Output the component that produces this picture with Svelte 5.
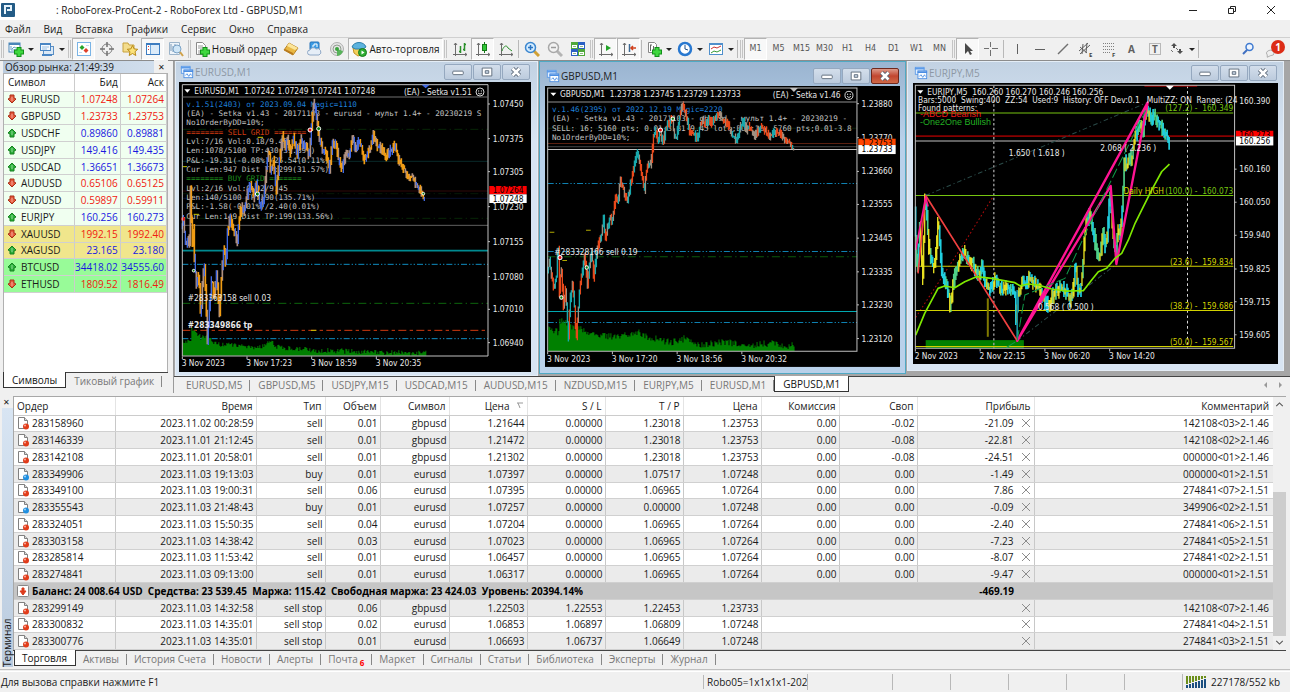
<script lang="ts">
	type Point = [number, number];
	type Tool = { icon: string; label: string; active?: boolean };

	const menu = ['Файл', 'Вид', 'Вставка', 'Графики', 'Сервис', 'Окно', 'Справка'];

	const panelTools: Tool[] = [
		{ icon: 'market', label: 'Обзор рынка', active: true },
		{ icon: 'target', label: 'Окно данных' },
		{ icon: 'folder', label: 'Избранное' },
		{ icon: 'navigator', label: 'Навигатор', active: true },
		{ icon: 'tester', label: 'Тестер стратегий' }
	];
	const serviceTools: Tool[] = [
		{ icon: 'gold', label: 'MetaEditor' },
		{ icon: 'cloud', label: 'Хостинг' },
		{ icon: 'signal', label: 'Сигналы' }
	];
	const chartTools: Tool[] = [
		{ icon: 'bars', label: 'Бары' },
		{ icon: 'candles', label: 'Свечи', active: true },
		{ icon: 'line', label: 'Линия' }
	];
	const zoomTools: Tool[] = [
		{ icon: 'zoomin', label: 'Увеличить' },
		{ icon: 'zoomout', label: 'Уменьшить' },
		{ icon: 'tiles', label: 'Мозаика' }
	];
	const scrollTools: Tool[] = [
		{ icon: 'autoscroll', label: 'Автопрокрутка', active: true },
		{ icon: 'shift', label: 'Сдвиг графика', active: true }
	];
	const cursorTools: Tool[] = [
		{ icon: 'cursor', label: 'Курсор', active: true },
		{ icon: 'cross', label: 'Перекрестие' }
	];
	const drawTools: Tool[] = [
		{ icon: 'vline', label: 'Вертикальная линия' },
		{ icon: 'hline', label: 'Горизонтальная линия' },
		{ icon: 'trend', label: 'Трендовая линия' },
		{ icon: 'channel', label: 'Канал' },
		{ icon: 'fibo', label: 'Фибоначчи' },
		{ icon: 'text', label: 'Текст' },
		{ icon: 'label', label: 'Метка' }
	];
	const periods = ['M1', 'M5', 'M15', 'M30', 'H1', 'H4', 'D1', 'W1', 'MN'];
	let period = $state('M1');

	const quotes = [
		{ symbol: 'EURUSD', bid: '1.07248', ask: '1.07264', up: false, group: 'fx' },
		{ symbol: 'GBPUSD', bid: '1.23733', ask: '1.23753', up: false, group: 'fx' },
		{ symbol: 'USDCHF', bid: '0.89860', ask: '0.89881', up: true, group: 'fx' },
		{ symbol: 'USDJPY', bid: '149.416', ask: '149.435', up: true, group: 'fx' },
		{ symbol: 'USDCAD', bid: '1.36651', ask: '1.36673', up: true, group: 'fx' },
		{ symbol: 'AUDUSD', bid: '0.65106', ask: '0.65125', up: false, group: 'fx' },
		{ symbol: 'NZDUSD', bid: '0.59897', ask: '0.59911', up: false, group: 'fx' },
		{ symbol: 'EURJPY', bid: '160.256', ask: '160.273', up: true, group: 'fx' },
		{ symbol: 'XAUUSD', bid: '1992.15', ask: '1992.40', up: false, group: 'metal' },
		{ symbol: 'XAGUSD', bid: '23.165', ask: '23.180', up: true, group: 'metal' },
		{ symbol: 'BTCUSD', bid: '34418.02', ask: '34555.60', up: true, group: 'crypto' },
		{ symbol: 'ETHUSD', bid: '1809.52', ask: '1816.49', up: false, group: 'crypto' }
	];

	const chartTabs = [
		'EURUSD,M5', 'GBPUSD,M5', 'USDJPY,M15', 'USDCAD,M15', 'AUDUSD,M15',
		'NZDUSD,M15', 'EURJPY,M5', 'EURUSD,M1', 'GBPUSD,M1'
	];
	let chartTab = $state(8);

	// order, time, type, volume, symbol, price, s/l, t/p, price, commission, swap, profit, comment
	const positions = [
		['283158960', '2023.11.02 00:28:59', 'sell', '0.01', 'gbpusd', '1.21644', '0.00000', '1.23018', '1.23753', '0.00', '-0.02', '-21.09', '142108<03>2-1.46'],
		['283146339', '2023.11.01 21:12:45', 'sell', '0.01', 'gbpusd', '1.21472', '0.00000', '1.23018', '1.23753', '0.00', '-0.08', '-22.81', '142108<02>2-1.46'],
		['283142108', '2023.11.01 20:58:01', 'sell', '0.01', 'gbpusd', '1.21302', '0.00000', '1.23018', '1.23753', '0.00', '-0.08', '-24.51', '000000<01>2-1.46'],
		['283349906', '2023.11.03 19:13:03', 'buy', '0.01', 'eurusd', '1.07397', '0.00000', '1.07517', '1.07248', '0.00', '0.00', '-1.49', '000000<01>2-1.51'],
		['283349100', '2023.11.03 19:00:31', 'sell', '0.06', 'eurusd', '1.07395', '0.00000', '1.06965', '1.07264', '0.00', '0.00', '7.86', '274841<07>2-1.51'],
		['283355543', '2023.11.03 21:48:43', 'buy', '0.01', 'eurusd', '1.07257', '0.00000', '0.00000', '1.07248', '0.00', '0.00', '-0.09', '349906<02>2-1.51'],
		['283324051', '2023.11.03 15:50:35', 'sell', '0.04', 'eurusd', '1.07204', '0.00000', '1.06965', '1.07264', '0.00', '0.00', '-2.40', '274841<06>2-1.51'],
		['283303158', '2023.11.03 14:38:42', 'sell', '0.03', 'eurusd', '1.07023', '0.00000', '1.06965', '1.07264', '0.00', '0.00', '-7.23', '274841<05>2-1.51'],
		['283285814', '2023.11.03 11:53:42', 'sell', '0.01', 'eurusd', '1.06457', '0.00000', '1.06965', '1.07264', '0.00', '0.00', '-8.07', '274841<02>2-1.51'],
		['283274841', '2023.11.03 09:13:00', 'sell', '0.01', 'eurusd', '1.06317', '0.00000', '1.06965', '1.07264', '0.00', '0.00', '-9.47', '000000<01>2-1.51']
	];
	const pending = [
		['283299149', '2023.11.03 14:32:58', 'sell stop', '0.06', 'gbpusd', '1.22503', '1.22553', '1.22453', '1.23733', '', '', '', '142108<07>2-1.46'],
		['283300832', '2023.11.03 14:35:01', 'sell stop', '0.02', 'eurusd', '1.06853', '1.06897', '1.06809', '1.07248', '', '', '', '274841<04>2-1.51'],
		['283300776', '2023.11.03 14:35:01', 'sell stop', '0.01', 'eurusd', '1.06693', '1.06737', '1.06649', '1.07248', '', '', '', '274841<03>2-1.51']
	];
	const headers = ['Ордер', 'Время', 'Тип', 'Объем', 'Символ', 'Цена', 'S / L', 'T / P', 'Цена', 'Комиссия', 'Своп', 'Прибыль', 'Комментарий'];

	const terminalTabs = ['Торговля', 'Активы', 'История Счета', 'Новости', 'Алерты', 'Почта', 'Маркет', 'Сигналы', 'Статьи', 'Библиотека', 'Эксперты', 'Журнал'];
	let terminalTab = $state(0);

	// --- Chart geometry, three units to a pixel ---

	function random(seed: number) {
		let s = seed;
		return () => {
			s = (s * 16807) % 2147483647;
			return s / 2147483647;
		};
	}

	function valueAt(points: Point[], x: number): number {
		for (let i = 1; i < points.length; i++) {
			const [x1, y1] = points[i];
			const [x0, y0] = points[i - 1];
			if (x <= x1) return y0 + ((y1 - y0) * (x - x0)) / (x1 - x0);
		}
		return points[points.length - 1][1];
	}

	/** One vertical stroke per bar, split into up, down and flat paths. */
	function priceBars(points: Point[], seed: number, spread: number) {
		const rnd = random(seed);
		const out = { up: '', down: '', flat: '' };
		const end = points[points.length - 1][0];
		for (let x = points[0][0]; x < end; x += 3) {
			const a = valueAt(points, x);
			const b = valueAt(points, x + 3);
			const top = Math.round(Math.min(a, b) - rnd() * spread);
			const bottom = Math.round(Math.max(a, b) + rnd() * spread);
			const flat = rnd() < 0.3;
			const follows = rnd() < 0.66;
			const key = flat ? 'flat' : b < a === follows ? 'up' : 'down';
			out[key] += `M${x} ${top}V${bottom}`;
		}
		return out;
	}

	function volumeArea(points: Point[], base: number, seed: number, jitter: number) {
		const rnd = random(seed);
		const end = points[points.length - 1][0];
		let d = `M${points[0][0]} ${base}`;
		for (let x = points[0][0]; x < end; x += 3) {
			d += `V${Math.round(valueAt(points, x) + (rnd() - 0.5) * jitter)}h3`;
		}
		return d + `V${base}Z`;
	}

	const eurusd = priceBars([
		[22, 500], [28, 480], [35, 560], [44, 530], [47, 560], [50, 310], [53, 570], [58, 510], [62, 620], [68, 680], [75, 640],
		[80, 790], [86, 640], [92, 625], [100, 850], [106, 740], [113, 650], [120, 720], [127, 640], [136, 765],
		[143, 640], [150, 550], [155, 620], [160, 520], [168, 470], [178, 510], [190, 545], [197, 460], [205, 440],
		[210, 460], [220, 400], [230, 370], [238, 410], [247, 370], [258, 440], [268, 420], [278, 310], [285, 270],
		[290, 340], [298, 300], [306, 400], [312, 340], [325, 230], [333, 265], [340, 240], [350, 280], [357, 230],
		[370, 280], [380, 235], [388, 260], [395, 255], [405, 290], [412, 200], [420, 125], [428, 180], [436, 240],
		[445, 270], [455, 280], [466, 330], [475, 250], [485, 245], [492, 290], [503, 330], [515, 280], [525, 290],
		[535, 235], [545, 275], [553, 240], [562, 260], [570, 300], [580, 285], [590, 260], [598, 225], [610, 260],
		[622, 265], [635, 290], [645, 275], [655, 268], [663, 255], [675, 305], [690, 325], [703, 352], [715, 350],
		[730, 380], [742, 400], [751, 420]
	], 11, 18);
	const eurusdVolume = volumeArea([
		[22, 845], [46, 845], [49, 800], [60, 820], [80, 835], [90, 825], [110, 845], [130, 852], [200, 856], [240, 862],
		[270, 858], [286, 838], [296, 856], [320, 864], [400, 870], [500, 873], [600, 878], [752, 879]
	], 887, 5, 16);

	const gbpusd = priceBars([
		[32, 640], [38, 600], [45, 650], [52, 690], [60, 640], [64, 530], [68, 700], [73, 610], [80, 740], [86, 690],
		[95, 830], [100, 720], [107, 670], [112, 720], [118, 840], [125, 740], [130, 670], [137, 630], [143, 590],
		[152, 670], [160, 600], [165, 570], [170, 650], [180, 580], [188, 540], [195, 520], [200, 470], [205, 545],
		[213, 500], [220, 470], [226, 490], [235, 415], [243, 430], [250, 360], [258, 375], [265, 410], [273, 418],
		[285, 350], [293, 310], [301, 268], [308, 310], [315, 345], [322, 400], [330, 320], [343, 310], [350, 225],
		[357, 215], [363, 240], [370, 220], [380, 245], [388, 200], [397, 190], [405, 170], [412, 220], [418, 238],
		[426, 180], [435, 135], [443, 150], [450, 180], [458, 210], [468, 218], [480, 236], [490, 200], [497, 180],
		[507, 195], [515, 180], [525, 190], [535, 175], [550, 162], [560, 185], [572, 190], [582, 220], [592, 232],
		[600, 238], [610, 200], [620, 185], [630, 210], [640, 200], [652, 230], [665, 210], [675, 200], [690, 220],
		[702, 228], [715, 215], [730, 222], [742, 238], [755, 242], [768, 266]
	], 23, 16);
	const gbpusdVolume = volumeArea([
		[32, 810], [60, 815], [65, 785], [80, 782], [100, 800], [130, 806], [150, 820], [220, 830], [270, 822], [300, 812],
		[320, 828], [400, 848], [440, 835], [480, 854], [560, 846], [620, 856], [680, 848], [768, 858]
	], 872, 31, 22);

	const eurjpy = priceBars([
		[33, 440], [40, 640], [48, 500], [57, 650], [63, 420], [70, 480], [75, 560], [82, 600], [90, 615], [97, 580],
		[103, 480], [110, 570], [115, 640], [125, 660], [132, 690], [139, 740], [147, 680], [155, 640], [165, 610],
		[175, 590], [181, 570], [190, 600], [198, 610], [207, 605], [215, 630], [225, 640], [235, 620], [243, 660],
		[256, 690], [265, 680], [275, 650], [285, 680], [295, 690], [310, 685], [325, 690], [334, 700], [337, 825],
		[340, 700], [350, 690], [357, 665], [365, 670], [377, 655], [390, 670], [405, 690], [415, 710], [425, 730],
		[435, 735], [450, 700], [462, 690], [475, 680], [490, 700], [497, 720], [505, 700], [515, 620], [522, 700],
		[530, 690], [537, 600], [542, 520], [548, 480], [556, 465], [563, 490], [570, 530], [577, 570], [585, 600],
		[592, 560], [596, 520], [603, 560], [610, 530], [617, 400], [623, 470], [630, 560], [636, 590], [641, 510],
		[648, 520], [655, 440], [661, 290], [668, 330], [675, 290], [683, 300], [690, 240], [697, 220], [707, 185],
		[717, 225], [722, 170], [728, 145], [735, 165], [742, 180], [748, 170], [756, 172], [765, 190], [775, 210],
		[785, 225], [793, 245]
	], 47, 26);

	const eurusdComment = [
		['v.1.51(2403) от 2023.09.04 Magic=1110', '#1e7fd8'],
		['(EA) - Setka v1.43 - 20171103 - eurusd - мульт 1.4+ - 20230219 S', '#c0c0c0'],
		['No1OrderByDD=10%;', '#c0c0c0'],
		['======== SELL GRID =======', '#d03a10'],
		['Lvl:7/16 Vol:0.18/9.45', '#c0c0c0'],
		['Len:1078/5100 TP:430(39.89%)', '#c0c0c0'],
		['P&L:-19.31(-0.08%)/25.54(0.11%)', '#c0c0c0'],
		['Cur Len:947 Dist TP:299(31.57%)', '#c0c0c0'],
		['======== BUY GRID =======', '#1e8f1e'],
		['Lvl:2/16 Vol:0.02/9.45', '#c0c0c0'],
		['Len:140/5100 TP:190(135.71%)', '#c0c0c0'],
		['P&L:-1.58(-0.01%)/2.40(0.01%)', '#c0c0c0'],
		['Cur Len:149 Dist TP:199(133.56%)', '#c0c0c0']
	];
	const gbpusdComment = [
		['v.1.46(2395) от 2022.12.19 Magic=2220', '#1e7fd8'],
		['(EA) - Setka v1.43 - 20171103 - gbpusd - мульт 1.4+ - 20230219 -', '#c0c0c0'],
		['SELL: 16; 5160 pts; 0.01-3.81-9.45 lots;BUY:16; 5760 pts;0.01-3.8', '#c0c0c0'],
		['No1OrderByDD=10%;', '#c0c0c0']
	];

	const eurusdScale: [string, number][] = [
		['1.07450', 132], ['1.07375', 236], ['1.07305', 335], ['1.07230', 440], ['1.07155', 545],
		['1.07080', 650], ['1.07010', 748], ['1.06940', 848]
	];
	const gbpusdScale: [string, number][] = [
		['1.23880', 131], ['1.23770', 233], ['1.23660', 334], ['1.23555', 433], ['1.23445', 534],
		['1.23335', 635], ['1.23230', 734], ['1.23120', 835]
	];
	const eurjpyScale: [string, number][] = [
		['160.390', 125], ['160.160', 328], ['160.050', 427], ['159.940', 526], ['159.825', 627],
		['159.715', 725], ['159.605', 824]
	];
	const eurjpyLevels: [string, number, string][] = [
		['(127.2) -  160.349', 160, '#76c410'],
		['(100.0) -  160.073', 407, '#76c410'],
		['(23.6) -  159.834', 619, '#d2d200'],
		['(38.2) -  159.686', 751, '#d2d200'],
		['(50.0) -  159.567', 859, '#d2d200']
	];
</script>

{#snippet icon(name: string)}
	<svg class="icon" viewBox="0 0 16 16" fill="none" aria-hidden="true">
		{#if name === 'newchart'}
			<rect x="1" y="2" width="11" height="9" fill="#fff" stroke="#4a86b8" />
			<path d="M1 3h11" stroke="#4a86b8" stroke-width="2" />
			<path d="M3 5v4h6M4 8l2-2 2 1" stroke="#6aa0cc" />
			<path d="M11 6v10M6 11h10" stroke="#12901a" stroke-width="5" />
			<path d="M11 7v8M7 11h8" stroke="#3fd83f" stroke-width="3" />
		{:else if name === 'profiles'}
			<rect x="4.500" y="5.500" width="10" height="8" fill="#dce9f6" stroke="#5b8fc4" />
			<rect x="1.500" y="2.500" width="10" height="7" fill="#f4f9ff" stroke="#4a86c4" />
			<path d="M1 3h11M3 14h10" stroke="#4a86c4" stroke-width="2" />
			<path d="M3 6h7M3 8h5" stroke="#9bbfe0" />
		{:else if name === 'market'}
			<rect x="1.500" y="1.500" width="13" height="13" fill="#fff" stroke="#7ab4e6" />
			<path d="M6 4l2.500 2.500L6 9 3.500 6.500z" fill="#25a528" />
			<path d="M10 7l2.500 2.500L10 12 7.500 9.500z" fill="#e0402a" />
			<path d="M3 11.500h3M10 4.500h3" stroke="#c6dcef" />
		{:else if name === 'target'}
			<circle cx="8" cy="8" r="5" stroke="#808080" />
			<path d="M8 1v5M8 10v5M1 8h5M10 8h5" stroke="#707070" stroke-width="1.500" />
		{:else if name === 'folder'}
			<path d="M1 2h5l1 2h5v7H1z" fill="#f3dc8c" stroke="#c7a23f" />
			<path d="M10.500 4.500l1.600 3.400 3.600.4-2.700 2.400.8 3.800-3.300-2-3.300 2 .8-3.800-2.700-2.400 3.600-.4z" fill="#fbe27a" stroke="#b98b18" />
		{:else if name === 'navigator'}
			<rect x="1.500" y="2.500" width="13" height="11" fill="#dcebf9" stroke="#3d7cc0" />
			<path d="M1 3h14" stroke="#3d7cc0" stroke-width="2" />
			<rect x="2" y="4" width="3" height="9" fill="#fff" />
			<path d="M3.500 5v1M3.500 8v1" stroke="#d33" />
			<path d="M5.500 4v9" stroke="#6fa5da" />
		{:else if name === 'tester'}
			<path d="M1.500 1.500h10v12h-10z" fill="#eef4fa" stroke="#9cb4ca" />
			<path d="M3 3v7M5 5v6M7 3v5" stroke="#7b9ab8" />
			<circle cx="9" cy="8" r="4" fill="#cfe6f7" stroke="#7aa2c6" />
			<path d="M12 11l3 4" stroke="#d0a24a" stroke-width="2" />
		{:else if name === 'neworder'}
			<path d="M2.500 1.500h6l3 3v9h-9z" fill="#fff" stroke="#8a8a8a" />
			<path d="M4 5h5M4 7h5M4 10h3M4 12h2" stroke="#999" />
			<path d="M11 6v10M6 11h10" stroke="#12901a" stroke-width="5" />
			<path d="M11 7v8M7 11h8" stroke="#3fd83f" stroke-width="3" />
		{:else if name === 'gold'}
			<path d="M6 2l9 5-5 7-9-5z" fill="#e9b844" stroke="#b98428" />
			<path d="M6 2l9 5-3 2-8-4z" fill="#fbe59a" />
			<path d="M1 9l9 5v-2L2 8z" fill="#b9791e" />
		{:else if name === 'cloud'}
			<rect x="4" y="1" width="9" height="8" rx="1" fill="#3c9be4" stroke="#2672b8" />
			<path d="M6 5h2V3h3v3" stroke="#fff" />
			<path d="M4 14a2.500 2.500 0 010-5 3.500 3.500 0 016-1 3 3 0 013 6z" fill="#e6eef7" stroke="#8fa8c6" />
		{:else if name === 'signal'}
			<circle cx="8" cy="8" r="6.500" fill="#e4e4e4" stroke="#b0b0b0" />
			<circle cx="8" cy="8" r="4" stroke="#909c90" />
			<path d="M8 8v7a7 7 0 006-5z" fill="#58b35a" />
			<circle cx="8" cy="8" r="2" fill="#3ba33f" />
		{:else if name === 'auto'}
			<path d="M2 7h11l-1 6-5 2-4-3z" fill="#f2cf5b" stroke="#c49226" />
			<path d="M1 6c2-6 12-6 14 0l-3 2H4z" fill="#5cb3de" stroke="#2f7faa" />
			<circle cx="11.500" cy="11.500" r="4" fill="#2fae33" stroke="#157a19" />
			<path d="M10.500 9.500v4l3-2z" fill="#fff" />
		{:else if name === 'bars' || name === 'candles' || name === 'line' || name === 'autoscroll' || name === 'shift'}
			<path d="M3.500 2v13M1 13.500h14M2 4l1.500-2L5 4M13 12l2 1.500L13 15" stroke="#6c6c6c" />
			{#if name === 'bars'}
				<path d="M8.500 5v7M7 10.500h1.500M12.500 2v8M11 8.500h1.500M12.500 3.500H14" stroke="#2a8f2a" stroke-width="1.500" />
			{:else if name === 'candles'}
				<path d="M9.500 1v11" stroke="#157a19" />
				<rect x="7.500" y="3.500" width="4" height="6" fill="#2fc636" stroke="#157a19" />
			{:else if name === 'line'}
				<path d="M4 10c2-6 5-6 6-3l4 3" stroke="#2a8f2a" />
			{:else if name === 'autoscroll'}
				<path d="M8 4v6l5-3z" fill="#22a428" />
			{:else}
				<path d="M8.500 3v8" stroke="#3d6a94" stroke-width="1.500" />
				<path d="M10 7h5M12 5l-2 2 2 2" stroke="#d0401c" stroke-width="1.500" />
			{/if}
		{:else if name === 'zoomin' || name === 'zoomout'}
			<path d="M10 10l5 5" stroke={name === 'zoomin' ? '#d0a035' : '#b4b4b4'} stroke-width="3" />
			<circle cx="6.500" cy="6.500" r="5" fill={name === 'zoomin' ? '#d4ecff' : '#f2f2f2'} stroke={name === 'zoomin' ? '#3b86cf' : '#a8a8a8'} stroke-width="1.500" />
			<path d={name === 'zoomin' ? 'M4 6.500h5M6.500 4v5' : 'M4 6.500h5'} stroke={name === 'zoomin' ? '#2b74c2' : '#9a9a9a'} stroke-width="1.500" />
		{:else if name === 'tiles'}
			<rect x="1" y="1" width="7" height="7" fill="#4fa83a" /><rect x="8" y="1" width="7" height="7" fill="#2b60c4" />
			<rect x="1" y="8" width="7" height="7" fill="#2b60c4" /><rect x="8" y="8" width="7" height="7" fill="#4fa83a" />
			<path d="M2 5.500h5M9 5.500h5M2 12.500h5M9 12.500h5" stroke="#fff" stroke-width="3" />
			<path d="M3 5.500h3M10 5.500h3M3 12.500h3M10 12.500h3" stroke="#8fb98a" />
		{:else if name === 'indicators'}
			<path d="M2.500 1.500h6l2 2v8h-8z" fill="#fff" stroke="#888" />
			<path d="M4 4h2M4.500 4v6M7.500 5v4" stroke="#666" />
			<path d="M11 6v10M6 11h10" stroke="#12901a" stroke-width="5" />
			<path d="M11 7v8M7 11h8" stroke="#3fd83f" stroke-width="3" />
		{:else if name === 'clock'}
			<circle cx="8" cy="8" r="6" fill="#fff" stroke="#2878d0" stroke-width="2.500" />
			<path d="M8 4v4l3 1" stroke="#1d4f88" />
		{:else if name === 'template'}
			<rect x="1.500" y="2.500" width="13" height="11" fill="#fff" stroke="#4f8fcb" />
			<path d="M1 3h14" stroke="#4f8fcb" stroke-width="2" />
			<path d="M3 8l3-2 3 1 4-2" stroke="#c33" /><path d="M3 12l3-2 3 1 4-2" stroke="#393" />
		{:else if name === 'cursor'}
			<path d="M5 2v11l3-3 2 4 2-1-2-3h3z" fill="#4a4a4a" />
		{:else if name === 'cross'}
			<path d="M7.500 1v5M7.500 9v6M1 7.500h5M9 7.500h6" stroke="#707070" />
		{:else if name === 'vline'}
			<path d="M8.500 3v10" stroke="#606060" />
		{:else if name === 'hline'}
			<path d="M3 8.500h10" stroke="#606060" />
		{:else if name === 'trend'}
			<path d="M3 13L13 3" stroke="#707070" stroke-width="1.500" />
		{:else if name === 'channel'}
			<path d="M1 10l9-8M2 13l10-9M2 6l7 6M5 3L4 13M9 2L8 12" stroke="#606060" />
			<text x="11" y="16" class="mini">E</text>
		{:else if name === 'fibo'}
			<path d="M2 2.500h12M2 5.500h12M2 8.500h12M2 11.500h8" stroke="#808080" stroke-dasharray="1 1" />
			<text x="11" y="16" class="mini">F</text>
		{:else if name === 'text'}
			<text x="4" y="12" class="letter">A</text>
		{:else if name === 'label'}
			<rect x="2.500" y="2.500" width="11" height="11" stroke="#808080" stroke-dasharray="1 1" />
			<text x="5" y="12" class="letter">T</text>
		{:else if name === 'arrows'}
			<path d="M5 2l3 3H6v2H4V5H2zM11 13l-3-3h2V8h2v2h2z" fill="#505050" /><path d="M2 9l2 2M7 7l2 2" stroke="#707070" />
		{:else if name === 'search'}
			<circle cx="9.500" cy="6" r="3.500" fill="#eef5ff" stroke="#3f7ad0" stroke-width="1.500" />
			<path d="M7 9l-4 4" stroke="#3f6fc0" stroke-width="2" />
		{:else if name === 'chart'}
			<rect x="1.500" y="1.500" width="10" height="8" fill="#e5f1ff" stroke="#5c9be8" /><path d="M1 3h11" stroke="#5c9be8" stroke-width="2" />
			<rect x="4.500" y="5.500" width="10" height="9" fill="#f8fcff" stroke="#4a8de2" /><path d="M4 7h11" stroke="#4a8de2" stroke-width="2" />
			<path d="M6 12l2-2 2 3 2-3 1 2" stroke="#4a8de2" />
		{/if}
	</svg>
{/snippet}

{#snippet tools(list: Tool[])}
	{#each list as tool}
		<button class="tool" class:pressed={tool.active} aria-label={tool.label}>{@render icon(tool.icon)}</button>
	{/each}
{/snippet}

{#snippet dropTool(name: string, label: string)}
	<button class="drop" aria-label={label}>
		{@render icon(name)}<span class="caret"></span>
	</button>
{/snippet}

{#snippet windowTitle(title: string)}
	<header class="win-title">
		{@render icon('chart')}
		<h2>{title}</h2>
		<div class="win-buttons">
			<button aria-label="Свернуть"><svg viewBox="0 0 28 16"><rect x="8" y="7" width="12" height="4" rx="1" fill="#fff" stroke="#566373" /></svg></button>
			<button aria-label="Развернуть"><svg viewBox="0 0 28 16"><path d="M8.500 3.500h11v9h-11zM12 6.500h4v3h-4z" fill="#fff" fill-rule="evenodd" stroke="#566373" /></svg></button>
			<button class="close" aria-label="Закрыть"><svg viewBox="0 0 28 16"><path d="M10 4l8 8M18 4l-8 8" stroke="#566373" stroke-width="5" /><path d="M10 4l8 8M18 4l-8 8" stroke="#fff" stroke-width="3" /></svg></button>
		</div>
	</header>
{/snippet}

{#snippet scale(list: [string, number][], x: number)}
	{#each list as [label, y]}
		<path d="M{x} {y}h6" stroke="#c0c0c0" stroke-width="3" />
		<text x={x + 14} y={y + 9}>{label}</text>
	{/each}
{/snippet}

{#snippet dates(list: string[], x: number, y: number)}
	{#each list as label, i}
		<path d="M{x + i * 194} {y - 30}v8" stroke="#c0c0c0" stroke-width="3" />
		<text x={x + i * 194 - 2} {y}>{label}</text>
	{/each}
{/snippet}

{#snippet smiley(x: number, y: number)}
	<g stroke="#fff" stroke-width="2.500" fill="none">
		<circle cx={x} cy={y} r="12" />
		<path d="M{x - 6} {y + 3}q6 7 12 0M{x - 4} {y - 5}v4M{x + 4} {y - 5}v4" />
	</g>
{/snippet}

{#snippet orderRow(row: string[])}
	<tr>
		{#each row as cell, i}
			{#if i === 0}
				<td class="order">
					<svg class="doc" viewBox="0 0 14 14" aria-hidden="true">
						<path d="M2.500 1.500h6l3 3v8h-9z" fill="#fff" stroke="#808080" />
						<path d="M8.500 1.500v3h3" fill="#ddd" stroke="#808080" />
						<circle cx="10" cy="10.500" r="3" fill={row[2] === 'buy' ? '#1f8fe0' : '#e23c1a'} />
						<circle cx="9" cy="9.500" r="1" fill="#fff" opacity=".6" />
					</svg>{cell}
				</td>
			{:else if i === 11}
				<td class="profit">
					{cell}<button class="cancel" aria-label="Закрыть ордер {row[0]}">
						<svg viewBox="0 0 10 10"><path d="M1 1l8 8M9 1L1 9" stroke="#8c8c8c" /></svg>
					</button>
				</td>
			{:else}
				<td class:bare={cell === ''}>{cell}</td>
			{/if}
		{/each}
	</tr>
{/snippet}

<div class="app">
	<header class="titlebar">
		<svg class="logo" viewBox="0 0 14 14" aria-hidden="true">
			<rect width="14" height="14" rx="1" fill="#235b86" />
			<path d="M4 11V3h6v4H6" stroke="#e6f3fb" stroke-width="2" fill="none" />
		</svg>
		<h1>: RoboForex-ProCent-2 - RoboForex Ltd - GBPUSD,M1</h1>
		<div class="caption">
			<button aria-label="Свернуть окно"><svg viewBox="0 0 10 10"><path d="M1 5.500h8" /></svg></button>
			<button aria-label="Восстановить окно"><svg viewBox="0 0 10 10"><path d="M1.500 3.500h5v5h-5zM3.500 3V1.500h5v5H7" /></svg></button>
			<button aria-label="Закрыть приложение"><svg viewBox="0 0 10 10"><path d="M1 1l8 8M9 1L1 9" /></svg></button>
		</div>
	</header>

	<nav class="menu">
		{#each menu as item}
			<button>{item}</button>
		{/each}
	</nav>

	<div class="toolbar">
		<span class="grip"></span>
		{@render dropTool('newchart', 'Новый график')}
		{@render dropTool('profiles', 'Профили')}
		<span class="grip"></span>
		{@render tools(panelTools)}
		<span class="grip"></span>
		<button class="wide order-btn">{@render icon('neworder')}Новый ордер</button>
		{@render tools(serviceTools)}
		<button class="wide auto-btn pressed">{@render icon('auto')}Авто-торговля</button>
		<span class="grip"></span>
		{@render tools(chartTools)}
		<span class="sep"></span>
		{@render tools(zoomTools)}
		<span class="grip"></span>
		{@render tools(scrollTools)}
		<span class="sep"></span>
		{@render dropTool('indicators', 'Индикаторы')}
		{@render dropTool('clock', 'Периоды')}
		{@render dropTool('template', 'Шаблоны')}
		<span class="sep"></span>
		<span class="grip"></span>
		{#each periods as p}
			<button class="tool period" class:pressed={period === p} onclick={() => (period = p)}>{p}</button>
		{/each}
		<span class="grip"></span>
		{@render tools(cursorTools)}
		<span class="sep"></span>
		{@render tools(drawTools)}
		{@render dropTool('arrows', 'Стрелки')}
		<span class="sep"></span>
		<div class="toolbar-end">
			<button class="tool" aria-label="Поиск">{@render icon('search')}</button>
			<button class="chat" aria-label="Сообщения">
				<svg viewBox="0 0 16 16" aria-hidden="true"><path d="M3 12a5 4 0 118 0l-4 1-4 2z" fill="#eee" stroke="#999" /></svg>
				<span class="badge">1</span>
			</button>
		</div>
	</div>

	<div class="main">
		<section class="watch">
			<header class="watch-title">
				<h2>Обзор рынка: 21:49:39</h2>
				<button aria-label="Закрыть обзор рынка">✕</button>
			</header>
			<div class="watch-body">
				<table class="quotes">
					<thead>
						<tr><th>Символ</th><th>Бид</th><th>Аск</th></tr>
					</thead>
					<tbody>
						{#each quotes as q}
							<tr class={q.group}>
								<td>
									<svg class="dir" class:down={!q.up} viewBox="0 0 10 10" aria-hidden="true">
										<path d="M5 1l4 4-2 1v3H3V6L1 5z" /><path d="M5 3v4" class="shine" />
									</svg>{q.symbol}
								</td>
								<td class:fall={!q.up}>{q.bid}</td>
								<td class:fall={!q.up}>{q.ask}</td>
							</tr>
						{/each}
					</tbody>
				</table>
			</div>
			<div class="tabs watch-tabs">
				<button class="tab current">Символы</button>
				<button class="tab">Тиковый график</button>
			</div>
		</section>

		<section class="desk">
			<div class="workspace">
				<article class="win first">
					{@render windowTitle('EURUSD,M1')}
					<svg class="chart" viewBox="12 66 1056 870">
						<rect x="12" y="66" width="1056" height="870" />
						<g fill="none" stroke-width="2">
							<path d="M22 208H939M22 475H939" stroke="#0b3a0b" stroke-dasharray="24 10 4 10" />
							<path d="M22 401H939" stroke="#0a240a" stroke-dasharray="24 10 4 10" />
							<path d="M22 304H939" stroke="#0d4040" />
							<path d="M22 393H939" stroke="#4a0c0c" />
							<path d="M22 415H939" stroke="#0d1a4a" />
							<path d="M22 496H939" stroke="#909090" />
							<path d="M22 572H939" stroke="#008a90" stroke-width="5" />
							<path d="M22 613H939M22 836H939" stroke="#0f8cc0" stroke-width="3" stroke-dasharray="18 6 4 6 4 6" />
							<path d="M22 730H939" stroke="#0d640d" stroke-width="3" stroke-dasharray="24 10 4 10" />
							<path d="M22 811H939" stroke="#d03a10" stroke-width="3" stroke-dasharray="24 10 10 10" />
						</g>
						<path d={eurusdVolume} fill="#008000" />
						<g class="comment">
							{#each eurusdComment as [text, color], i}
								<text x="34" y={140 + i * 28} fill={color}>{text}</text>
							{/each}
						</g>
						<g fill="none" stroke-width="5">
							<path d={eurusd.flat} stroke="#b09080" />
							<path d={eurusd.down} stroke="#f09c14" />
							<path d={eurusd.up} stroke="#4169e1" stroke-width="4" />
							<path d="M22 320h14M248 232h16M56 463h16M408 811h16" stroke="#c8c800" stroke-width="3" />
						</g>
						<g stroke="#fff" stroke-width="3">
							<circle cx="405" cy="210" r="6" fill="#e01010" /><circle cx="431" cy="206" r="6" fill="#0a7a0a" />
							<circle cx="247" cy="402" r="6" fill="#0a7a0a" /><circle cx="745" cy="401" r="4" fill="#0a7a0a" />
							<circle cx="56" cy="632" r="4" fill="#0a7a0a" />
						</g>
						<circle cx="24" cy="477" r="6" fill="#e01010" />
						<path d="M22 74H939V888H22Z" fill="none" stroke="#c0c0c0" stroke-width="3" />
						<path d="M22 111H939" stroke="#707070" stroke-width="3" />
						<path d="M740 74h24l-12 11z" fill="#4169e1" />
						<path d="M28 88h18l-9 10z" fill="#fff" />
						<text x="58" y="102">EURUSD,M1  1.07242 1.07249 1.07241 1.07248</text>
						<text x="890" y="104" text-anchor="end">(EA) - Setka v1.51</text>
						{@render smiley(915, 96)}
						<text x="38" y="724">#283363158 sell 0.03</text>
						<text x="38" y="805" class="bold">#283349866 tp</text>
						{@render scale(eurusdScale, 939)}
						{@render dates(['3 Nov 2023', '3 Nov 17:23', '3 Nov 18:59', '3 Nov 20:35'], 22, 919)}
						<rect x="943" y="378" width="112" height="25" fill="#f00" />
						<text x="953" y="400" class="dark">1.07264</text>
						<rect x="943" y="403" width="112" height="26" fill="#fff" />
						<text x="953" y="425" class="dark">1.07248</text>
					</svg>
				</article>

				<article class="win second">
					{@render windowTitle('GBPUSD,M1')}
					<svg class="chart" viewBox="22 78 1064 842">
						<rect x="22" y="78" width="1064" height="842" />
						<g fill="none" stroke-width="3">
							<path d="M30 370H957M30 574H957M30 787H957" stroke="#0f80b0" stroke-dasharray="18 6 4 6 4 6" />
							<path d="M30 590H957" stroke="#0b5a0b" stroke-dasharray="24 10 4 10" />
							<path d="M30 205H957" stroke="#0a200a" stroke-dasharray="24 10 4 10" />
							<path d="M30 250H957" stroke="#5a2010" />
							<path d="M30 260H957" stroke="#686868" stroke-width="2" />
							<path d="M30 268H957" stroke="#c0c0c0" />
							<path d="M30 754H957" stroke="#00a8b0" />
						</g>
						<path d={gbpusdVolume} fill="#008000" />
						<g class="comment">
							{#each gbpusdComment as [text, color], i}
								<text x="43" y={156 + i * 28} fill={color}>{text}</text>
							{/each}
						</g>
						<g fill="none" stroke-width="4">
							<path d={gbpusd.flat} stroke="#a09080" />
							<path d={gbpusd.down} stroke="#e8481a" />
							<path d={gbpusd.up} stroke="#18a8ac" />
							<path d="M36 516h14M145 510h14M74 601h14" stroke="#b0a800" stroke-width="3" />
						</g>
						<g stroke="#fff" stroke-width="3">
							<circle cx="368" cy="210" r="6" fill="#e01010" /><circle cx="405" cy="176" r="5" fill="#0a7a0a" />
							<circle cx="67" cy="592" r="6" fill="#e01010" /><circle cx="71" cy="712" r="5" fill="#0a7a0a" />
							<circle cx="147" cy="622" r="5" fill="#0a7a0a" />
						</g>
						<path d="M30 84H957V873H30Z" fill="none" stroke="#c0c0c0" stroke-width="3" />
						<path d="M30 126H957" stroke="#909090" stroke-width="3" />
						<path d="M756 84h24l-12 12z" fill="#c0c0c0" />
						<path d="M38 98h18l-9 10z" fill="#fff" />
						<text x="67" y="112">GBPUSD,M1  1.23738 1.23745 1.23729 1.23733</text>
						<text x="908" y="114" text-anchor="end">(EA) - Setka v1.46</text>
						{@render smiley(933, 106)}
						<text x="50" y="585">#283328166 sell 0.19</text>
						{@render scale(gbpusdScale, 957)}
						{@render dates(['3 Nov 2023', '3 Nov 17:20', '3 Nov 18:56', '3 Nov 20:32'], 30, 904)}
						<rect x="961" y="236" width="112" height="19" fill="#ff4500" />
						<text x="971" y="257" class="dark">1.23753</text>
						<rect x="961" y="255" width="112" height="27" fill="#fff" />
						<text x="971" y="277" class="dark">1.23733</text>
					</svg>
				</article>

				<article class="win third">
					{@render windowTitle('EURJPY,M5')}
					<svg class="chart" viewBox="25 70 1093 842">
						<rect x="25" y="70" width="1093" height="842" />
						<rect x="63" y="840" width="294" height="24" fill="#008000" />
						<g fill="none" stroke-width="3">
							<path d="M32 229H988" stroke="#800" stroke-width="5" />
							<path d="M32 244H988" stroke="#c0c0c0" />
							<path d="M267 78V864" stroke="#a0a0a0" stroke-width="4" stroke-dasharray="7 7" />
							<path d="M847 78V864" stroke="#d8d8d8" stroke-dasharray="8 8" />
							<path d="M63 407L728 128" stroke="#2a4a48" stroke-dasharray="14 8 4 8" />
							<path d="M337 842L632 614" stroke="#2a4a48" stroke-dasharray="14 8 4 8" />
							<path d="M33 772L181 545L267 407" stroke="#b00c0c" stroke-dasharray="5 7" />
							{#each eurjpyLevels as [, y, color]}
								<path d="M32 {y}H984" stroke={color} />
							{/each}
						</g>
						<g fill="none" stroke-width="5">
							<path d={eurjpy.flat} stroke="#4fd088" />
							<path d={eurjpy.down} stroke="#20cfe0" />
							<path d={eurjpy.up} stroke="#e8e020" stroke-width="4" />
							<path d="M249 715V830" stroke="#807a00" stroke-width="6" />
							<path d="M337 690V842" stroke="#1c90a0" />
						</g>
						<g fill="none" stroke-linejoin="round">
							<path d="M40 640L63 407L337 842" stroke="#f04040" stroke-width="5" />
							<path d="M33 570L63 412L70 440" stroke="#ff1493" stroke-width="5" />
							<path d="M337 842L728 128L634 612L617 378Z" stroke="#ff1493" stroke-width="7" />
							<path d="M305 862L337 842L360 705L480 655L560 480L722 152" stroke="#0f9a4a" stroke-width="3" stroke-dasharray="30 10" />
							<path d="M33 825L60 760L100 685L120 678L150 683L180 665L215 650L260 655L330 668L345 677L370 672L400 675L440 687L480 693L535 692L560 660L580 635L605 625L630 595L650 580L670 540L690 490L710 450L740 390L770 335L793 313" stroke="#7fe800" stroke-width="5" />
						</g>
						<path d="M718 79h158" stroke="#900" stroke-width="5" />
						<path d="M32 77H988V864H32Z" fill="none" stroke="#c0c0c0" stroke-width="3" />
						<path d="M782 78h24l-12 12z" fill="#fff" />
						<path d="M38 92h18l-9 10z" fill="#fff" />
						<text x="68" y="105">EURJPY,M5  160.260 160.270 160.246 160.256</text>
						<text x="40" y="131">Bars:5000  Swing:400  ZZ:54  Used:9  History: OFF Dev:0.1   MultiZZ: ON  Range: (24</text>
						<text x="40" y="155">Found patterns:</text>
						<text x="46" y="171" class="pattern" fill="#f01818">-ABCD Bearish</text>
						<text x="46" y="195" class="pattern" fill="#22b022">-One2One Bullish</text>
						<text x="312" y="290">1.650 ( 1.618 )</text>
						<text x="586" y="274">2.068 ( 2.236 )</text>
						<text x="399" y="751">0.568 ( 0.500 )</text>
						{#each eurjpyLevels as [label, y, color]}
							<text x="984" y={y - 5} text-anchor="end" style:fill={color}>{label}</text>
						{/each}
						<text x="655" y="402" class="daily">Daily HIGH</text>
						{@render scale(eurjpyScale, 988)}
						{@render dates(['2 Nov 2023', '2 Nov 22:15', '3 Nov 06:20', '3 Nov 14:20'], 32, 896)}
						<rect x="992" y="213" width="112" height="17" fill="#f00" />
						<text x="1002" y="234" class="dark">160.273</text>
						<rect x="992" y="230" width="112" height="27" fill="#fff" />
						<text x="1002" y="252" class="dark">160.256</text>
					</svg>
				</article>
			</div>
			<nav class="tabs chart-tabs">
				{#each chartTabs as tab, i}
					<button class="tab" class:current={chartTab === i} onclick={() => (chartTab = i)}>{tab}</button>
				{/each}
				<span class="tab-scroll"><i class="left"></i><i class="right"></i></span>
			</nav>
		</section>
	</div>

	<section class="terminal">
		<aside class="strip">
			<button aria-label="Закрыть терминал">✕</button>
			<h2>Терминал</h2>
		</aside>
		<div class="terminal-body">
			<div class="orders-wrap">
				<table class="orders">
					<colgroup>
						<col class="c-order" /><col class="c-time" /><col class="c-type" /><col class="c-volume" /><col class="c-symbol" />
						<col class="c-price" /><col class="c-price" /><col class="c-price" /><col class="c-price" /><col class="c-price" /><col class="c-price" />
						<col class="c-profit" /><col />
					</colgroup>
					<thead>
						<tr>
							{#each headers as h, i}
								<th>{h}{#if i === 5}<svg class="sort" viewBox="0 0 6 8" aria-hidden="true"><path d="M0 1h6M1 1l2 5" stroke="#999" fill="none" /></svg>{/if}</th>
							{/each}
						</tr>
					</thead>
					<tbody>
						{#each positions as row}
							{@render orderRow(row)}
						{/each}
						<tr class="summary">
							<td colspan="11">
								<svg class="doc" viewBox="0 0 14 14" aria-hidden="true">
									<rect x="1.500" y="1.500" width="11" height="11" rx="1" fill="#fff" stroke="#888" />
									<path d="M7 11l3-4H8V4H6v3H4z" fill="#dc3a1a" stroke="#dc3a1a" />
								</svg>Баланс: 24 008.64 USD&nbsp; Средства: 23 539.45&nbsp; Маржа: 115.42&nbsp; Свободная маржа: 23 424.03&nbsp; Уровень: 20394.14%
							</td>
							<td class="total">-469.19</td>
							<td></td>
						</tr>
						{#each pending as row}
							{@render orderRow(row)}
						{/each}
					</tbody>
				</table>
				<div class="scrollbar">
					<svg viewBox="0 0 12 12" aria-hidden="true"><path d="M3 8l3-3 3 3" /></svg>
					<div class="track"><div class="thumb"></div></div>
					<svg viewBox="0 0 12 12" aria-hidden="true"><path d="M3 4l3 3 3-3" /></svg>
				</div>
			</div>
			<nav class="tabs terminal-tabs">
				{#each terminalTabs as tab, i}
					<button class="tab" class:current={terminalTab === i} onclick={() => (terminalTab = i)}>
						{tab}{#if tab === 'Почта'}<sub>6</sub>{/if}
					</button>
				{/each}
			</nav>
		</div>
	</section>

	<footer class="status">
		<span class="hint">Для вызова справки нажмите F1</span>
		<span class="profile">Robo05=1x1x1x1-202</span>
		<span class="slot"></span>
		<span class="slot"></span>
		<span class="slot"></span>
		<span class="slot"></span>
		<span class="slot"></span>
		<span class="slot"></span>
		<span class="traffic">
			<svg viewBox="0 0 21 12" aria-hidden="true">
				{#each [0, 3, 6, 9, 12, 15, 18] as x, i}
					<rect {x} y="0" width="2" height={8 - i} fill="#6b8e1a" />
					<rect {x} y={9 - i} width="2" height={3 + i} fill="#1c4f80" />
				{/each}
			</svg>
			227178/552 kb
		</span>
	</footer>
</div>

<style>
	:global(body) {
		background: #f0f0f0;
	}
	.app {
		min-height: 100vh;
		display: flex;
		flex-direction: column;
		background: #f0f0f0;
		color: #1a1a1a;
		font: 10px/14px 'Open Sans', 'Noto Sans', sans-serif;
	}
	button {
		border: none;
		background: none;
		padding: 0;
		margin: 0;
		font: inherit;
		color: inherit;
	}
	h1,
	h2 {
		margin: 0;
		font: inherit;
		white-space: nowrap;
	}
	svg {
		display: block;
	}
	.icon {
		width: 16px;
		height: 16px;
		flex: none;
	}
	.icon .letter {
		font: bold 10px 'Open Sans', sans-serif;
		fill: #606060;
	}
	.icon .mini {
		font: bold 6px 'Open Sans', sans-serif;
		fill: #404040;
	}

	.titlebar {
		display: flex;
		align-items: center;
		height: 20px;
		background: #fff;
	}
	.logo {
		width: 14px;
		height: 14px;
		margin-left: 1px;
	}
	.titlebar h1 {
		margin-left: 41px;
		flex: 1;
	}
	.caption {
		display: flex;
	}
	.caption button {
		width: 39px;
		display: grid;
		place-items: center;
	}
	.caption svg {
		width: 10px;
		height: 10px;
		fill: none;
		stroke: #222;
	}

	.menu {
		display: flex;
		gap: 13px;
		height: 17px;
		padding-left: 5px;
	}

	.toolbar {
		display: flex;
		align-items: stretch;
		height: 22px;
		border-top: 1px solid #d0d0d0;
		border-bottom: 1px solid #8c8c8c;
		overflow: hidden;
	}
	.grip {
		width: 3px;
		flex: none;
		box-sizing: border-box;
		border: solid #c4c4c4;
		border-width: 0 1px;
		margin: 2px 1px;
	}
	.sep {
		width: 1px;
		margin: 2px 1px;
		flex: none;
		background: #b8b8b8;
	}
	.tool,
	.drop,
	.wide {
		box-sizing: border-box;
		display: flex;
		align-items: center;
		justify-content: center;
		flex: none;
		border: 1px solid transparent;
		white-space: nowrap;
	}
	.tool {
		width: 23px;
	}
	.pressed {
		background: #f8f8f8;
		border-color: #b4b4b4 #fff #fff #b4b4b4;
	}
	.drop {
		width: 31px;
		justify-content: flex-start;
		padding-left: 2px;
		gap: 4px;
	}
	.caret {
		border: solid transparent;
		border-width: 3px 3px 0;
		border-top-color: #222;
	}
	.wide {
		gap: 2px;
	}
	.order-btn {
		width: 87px;
	}
	.auto-btn {
		width: 95px;
	}
	.period {
		font-size: 8px;
		font-family: 'DejaVu Sans', sans-serif;
		color: #555;
	}
	.toolbar-end {
		display: flex;
		margin-left: auto;
		padding-right: 5px;
	}
	.chat {
		display: flex;
		align-items: center;
		margin-left: 6px;
	}
	.chat svg {
		width: 12px;
		height: 16px;
		align-self: flex-end;
	}
	.badge {
		width: 14px;
		height: 14px;
		margin: 0 0 4px -6px;
		border-radius: 50%;
		background: #dc2c16;
		color: #fff;
		font-weight: bold;
		line-height: 14px;
		text-align: center;
	}

	.main {
		display: flex;
		align-items: stretch;
	}
	.watch {
		width: 174px;
		flex: none;
		box-sizing: border-box;
		padding: 0 5px 4px 3px;
		display: flex;
		flex-direction: column;
		border-right: 1px solid #9a9a9a;
	}
	.watch-title {
		display: flex;
		justify-content: space-between;
		align-items: center;
		height: 12px;
		background: linear-gradient(90deg, #bacbde, #d3e0ee);
	}
	.watch-title h2 {
		padding-left: 2px;
	}
	.watch-title button {
		background: #f0f0f0;
		width: 14px;
		font-size: 8px;
	}
	.watch-body {
		flex: 1;
		background: #fff;
		border: 1px solid #b0b0b0;
		border-width: 1px 1px 0;
	}
	table {
		border-collapse: collapse;
		table-layout: fixed;
		width: 100%;
	}
	th,
	td {
		padding: 0 2px 0 0;
		text-align: right;
		font-weight: inherit;
		white-space: nowrap;
		overflow: hidden;
		line-height: 14px;
	}
	.quotes {
		height: 219px;
	}
	.quotes thead tr {
		height: 17px;
	}
	.quotes th,
	.quotes td {
		border-right: 1px solid #ccc;
		border-bottom: 1px solid #d0d0d0;
	}
	.quotes td {
		color: #1818e0;
	}
	.quotes td:first-child {
		color: #1a1a1a;
		padding-left: 3px;
	}
	.quotes th:first-child {
		box-sizing: border-box;
		width: 70px;
		padding-left: 4px;
	}
	.quotes th:first-child,
	.quotes td:first-child {
		text-align: left;
	}
	.quotes td.fall {
		color: #f02010;
	}
	.fx {
		background: #f0fff0;
	}
	.metal {
		background: #f0e68c;
	}
	.crypto {
		background: #98fb98;
	}
	.dir {
		display: inline-block;
		width: 10px;
		height: 10px;
		margin-right: 4px;
		vertical-align: -1px;
		fill: #2bb03a;
		stroke: #14801f;
	}
	.dir.down {
		transform: rotate(180deg);
		fill: #e65a3c;
		stroke: #a83018;
	}
	.dir .shine {
		fill: none;
		stroke: #fff;
		opacity: 0.5;
	}

	.tabs {
		display: flex;
		border-top: 1px solid #444;
		color: #777;
	}
	.tab {
		position: relative;
		padding: 0 8px;
		height: 16px;
		line-height: 14px;
		white-space: nowrap;
	}
	.tab:not(.current)::after {
		content: '';
		position: absolute;
		right: 0;
		top: 3px;
		height: 11px;
		border-right: 1px solid #888;
	}
	.tab.current {
		box-sizing: border-box;
		height: 16px;
		margin-top: -1px;
		background: #fff;
		border: 1px solid #333;
		border-top: none;
		color: #111;
	}

	.desk {
		flex: 1;
		min-width: 0;
	}
	.workspace {
		display: grid;
		grid-template-columns: 363fr 367fr 377fr;
		gap: 1px;
		align-items: start;
		padding: 0 6px 0 1px;
		background: #a6a6a6;
	}
	.win {
		background: linear-gradient(#c2d2e3, #d8e5f3 80px);
		box-shadow: inset 0 0 0 1px #e4edf6;
		color: #8d98a4;
	}
	.first {
		padding: 0 7px 4px 4px;
	}
	.second {
		padding: 4px 6px 7px;
		background: linear-gradient(#9ab4d0, #b9d1ea 80px);
		box-shadow: inset 0 0 0 1px #4fa9c4;
		color: #1e1e1e;
	}
	.third {
		padding: 1px 6px 7px;
	}
	.win-title {
		display: flex;
		align-items: center;
		height: 21px;
		gap: 1px;
	}
	.win-title .icon {
		width: 14px;
		height: 14px;
		margin-left: 1px;
	}
	.win-title h2 {
		flex: 1;
	}
	.win-buttons {
		display: flex;
		gap: 1px;
	}
	.win-buttons button {
		border: 1px solid #95a8bf;
		border-radius: 2px;
		background: linear-gradient(#d3deeb, #bccbdd);
	}
	.win-buttons svg {
		width: 26px;
		height: 14px;
	}
	.win-buttons .close {
		margin-right: 1px;
	}
	.second .close {
		background: linear-gradient(#dc9a8a, #c24630 50%, #cf6a48);
		border-color: #70281c;
	}
	.chart {
		width: 100%;
		height: auto;
	}
	.chart text {
		font: 25px 'DejaVu Sans Condensed', 'DejaVu Sans', sans-serif;
		fill: #e8e8e8;
		white-space: pre;
	}
	.chart .comment text {
		font: 23px 'DejaVu Sans Mono', monospace;
		fill: revert-layer;
	}
	.chart text.dark {
		fill: #000;
	}
	.chart text.bold {
		font-weight: bold;
	}
	.chart text.pattern {
		font: 27px 'Liberation Sans', Arial, sans-serif;
		fill: revert-layer;
	}
	.chart text.daily {
		fill: #d8d800;
	}

	.chart-tabs {
		height: 16px;
		padding-left: 4px;
	}
	.tab-scroll {
		display: flex;
		gap: 12px;
		align-items: center;
		margin-left: auto;
		padding-right: 8px;
	}
	.tab-scroll i {
		border: 3px solid transparent;
	}
	.tab-scroll .left {
		border-left: none;
		border-right-color: #999;
	}
	.tab-scroll .right {
		border-right: none;
		border-left-color: #999;
	}

	.terminal {
		display: flex;
		margin-top: 3px;
		border-bottom: 1px solid #c0c0c0;
	}
	.strip {
		width: 13px;
		flex: none;
		display: flex;
		flex-direction: column;
	}
	.strip button {
		font-size: 8px;
		height: 12px;
		line-height: 12px;
	}
	.strip h2 {
		flex: 1;
		margin: 0 0 2px 2px;
		writing-mode: vertical-rl;
		transform: rotate(180deg);
		background: linear-gradient(#bacbde, #d8e5f3);
		line-height: 11px;
	}
	.terminal-body {
		flex: 1;
		min-width: 0;
		margin-right: 4px;
	}
	.orders-wrap {
		display: flex;
		border: 1px solid #a8a8a8;
		border-width: 1px 0 0 1px;
	}
	.orders {
		flex: 1;
		height: 253px;
		background: #fff;
	}
	.orders thead tr {
		height: 18px;
	}
	.c-order {
		width: 101px;
	}
	.c-time {
		width: 141px;
	}
	.c-type {
		width: 69px;
	}
	.c-volume {
		width: 55px;
	}
	.c-symbol {
		width: 69px;
	}
	.c-price {
		width: 78px;
	}
	.c-profit {
		width: 117px;
	}
	.orders th {
		border-right: 1px solid #e4e4e4;
		border-bottom: 1px solid #ccc;
		padding-right: 3px;
	}
	.orders td {
		border-right: 1px solid #c8c8c8;
		border-bottom: 1px solid #d0d0d0;
	}
	.orders th:first-child {
		text-align: left;
		padding-left: 3px;
	}
	.orders tr > :last-child {
		border-right: none;
		padding-right: 4px;
	}
	.orders tbody tr:nth-child(even) {
		background: #ebebeb;
	}
	.orders .order {
		text-align: left;
		padding-left: 2px;
	}
	.orders td.bare {
		border-right: none;
	}
	.doc {
		display: inline-block;
		width: 14px;
		height: 14px;
		margin-right: 2px;
		vertical-align: -3px;
	}
	.cancel {
		margin: 0 1px 0 7px;
		vertical-align: -1px;
	}
	.cancel svg {
		width: 10px;
		height: 10px;
	}
	.orders tbody .summary {
		background: #c6c6c6;
		font-weight: bold;
		color: #000;
	}
	.orders .summary td {
		border-right: none;
	}
	.orders .summary td:first-child {
		text-align: left;
		padding-left: 2px;
	}
	.orders .summary .total {
		padding-right: 20px;
	}
	.sort {
		display: inline-block;
		width: 6px;
		height: 8px;
		margin: 0 1px 0 7px;
	}
	.scrollbar {
		width: 13px;
		flex: none;
		display: flex;
		flex-direction: column;
		background: #f0f0f0;
	}
	.scrollbar svg {
		width: 13px;
		height: 14px;
		fill: none;
		stroke: #555;
	}
	.track {
		flex: 1;
		display: flex;
		flex-direction: column;
		justify-content: flex-end;
	}
	.thumb {
		height: 64%;
		background: #cdcdcd;
	}
	.terminal-tabs {
		padding: 0 0 2px 1px;
	}
	.terminal-tabs .tab {
		padding: 0 8px 0 7px;
	}
	sub {
		color: #f00;
		font-size: 8px;
		font-weight: bold;
		line-height: 8px;
		vertical-align: -3px;
		margin-left: 2px;
	}

	.status {
		display: flex;
		align-items: center;
		flex: 1;
		margin-top: 1px;
		border-top: 1px solid #fff;
		min-height: 19px;
	}
	.hint {
		flex: 1;
		padding-left: 1px;
	}
	.profile {
		width: 100px;
		padding-left: 3px;
		white-space: nowrap;
		border-left: 1px solid #b8b8b8;
	}
	.slot {
		width: 57px;
		height: 16px;
		border-left: 1px solid #b8b8b8;
	}
	.slot:nth-of-type(3) {
		width: 84px;
	}
	.traffic {
		display: flex;
		align-items: center;
		gap: 4px;
		width: 104px;
		height: 16px;
		padding-left: 3px;
		border-left: 1px solid #b8b8b8;
	}
	.traffic svg {
		width: 21px;
		height: 12px;
	}
</style>
